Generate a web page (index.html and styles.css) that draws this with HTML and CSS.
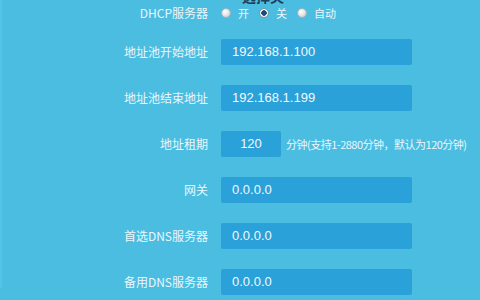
FILE: index.html
```html
<!DOCTYPE html>
<html lang="zh">
<head>
<meta charset="utf-8">
<link rel="stylesheet" href="styles.css">
</head>
<body>
<div class="page">
  <div class="title">选择关</div>
  <div class="form">
    <div class="row radio-row">
      <div class="label">DHCP服务器</div>
      <div class="radios">
        <span class="opt"><span class="radio"></span>开</span>
        <span class="opt"><span class="radio on"></span>关</span>
        <span class="opt"><span class="radio"></span>自动</span>
      </div>
    </div>
    <div class="row">
      <div class="label">地址池开始地址</div>
      <div class="input">192.168.1.100</div>
    </div>
    <div class="row">
      <div class="label">地址池结束地址</div>
      <div class="input">192.168.1.199</div>
    </div>
    <div class="row">
      <div class="label">地址租期</div>
      <div class="lease">
        <div class="input small">120</div>
        <span class="hint">分钟(支持1-2880分钟，默认为120分钟)</span>
      </div>
    </div>
    <div class="row">
      <div class="label">网关</div>
      <div class="input">0.0.0.0</div>
    </div>
    <div class="row">
      <div class="label">首选DNS服务器</div>
      <div class="input">0.0.0.0</div>
    </div>
    <div class="row">
      <div class="label">备用DNS服务器</div>
      <div class="input">0.0.0.0</div>
    </div>
  </div>
</div>
</body>
</html>
```

FILE: styles.css
```css
html, body {
  margin: 0;
  padding: 0;
}
body {
  width: 480px;
  height: 300px;
  overflow: hidden;
  background: #4bbde1;
  font-family: "Noto Sans CJK SC", "Noto Sans", sans-serif;
  color: #eaf6fb;
  font-size: 12px;
}
.page {
  border-left: 2px solid #55c3e4;
  height: 300px;
  box-sizing: border-box;
}
.title {
  margin-top: -12px;
  height: 16px;
  line-height: 16px;
  font-size: 14px;
  font-weight: bold;
  color: #1d3f5c;
  padding-left: 240px;
}
.form {
  display: flex;
  flex-direction: column;
  gap: 20px;
}
.row {
  display: grid;
  grid-template-columns: 206px 191px;
  column-gap: 13px;
  align-items: center;
  height: 26px;
}
.radio-row {
  height: 20px;
  margin-top: -4px;
  margin-bottom: -1px;
}
.label {
  text-align: right;
  white-space: nowrap;
  line-height: 26px;
}
.radios {
  display: flex;
  align-items: center;
  font-size: 11px;
}
.opt {
  display: flex;
  align-items: center;
  gap: 7px;
  margin-right: 10px;
}
.radio {
  width: 10px;
  height: 10px;
  border-radius: 50%;
  background: radial-gradient(circle at 40% 35%, #ffffff 0%, #e4e4e4 50%, #bdbdbd 100%);
  border: 1px solid #9fb5bf;
  box-sizing: border-box;
}
.radio.on {
  background: radial-gradient(circle, #1e4a78 0 2.5px, #f5f5f5 3px 100%);
  border-color: #7c93a1;
}
.input {
  height: 26px;
  line-height: 26px;
  background: #2aa1d9;
  border-radius: 2px;
  padding-left: 11px;
  box-sizing: border-box;
  font-size: 13px;
  color: #f1f9fd;
  font-family: "Liberation Sans", "Noto Sans", sans-serif;
}
.lease {
  display: flex;
  align-items: center;
  gap: 5px;
  white-space: nowrap;
}
.input.small {
  width: 60px;
  padding-left: 0;
  text-align: center;
  flex: none;
}
.hint {
  font-size: 11px;
  letter-spacing: -0.5px;
}
```
